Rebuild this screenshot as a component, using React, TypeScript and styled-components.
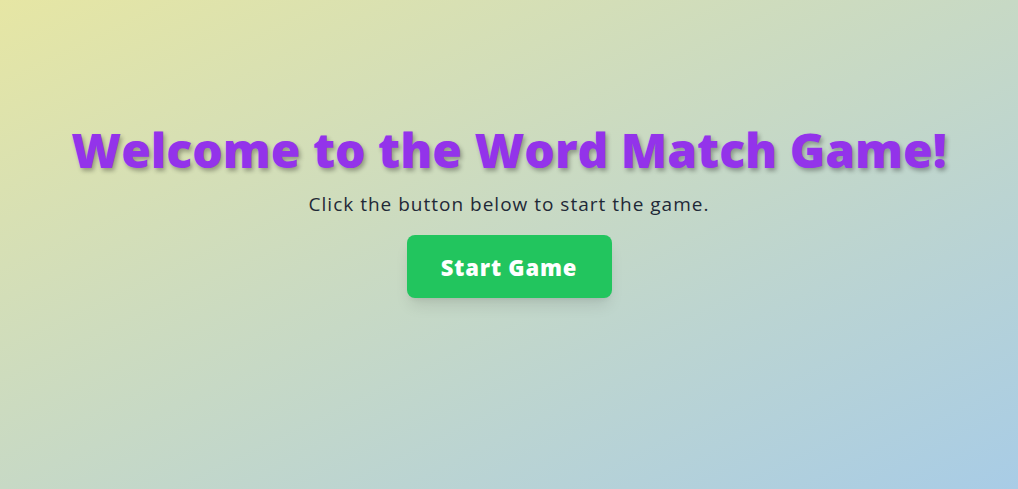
import React from "react";
import styled, { createGlobalStyle } from "styled-components";

const Global = createGlobalStyle`
  html, body { margin: 0; padding: 0; }
  body {
    font-family: "Open Sans", "Liberation Sans", sans-serif;
    background: linear-gradient(to bottom right, #e6e6a4, #a8cce6);
    min-height: 489px;
  }
`;

const Page = styled.main`
  min-height: 489px;
  display: flex;
  flex-direction: column;
  align-items: center;
  padding-top: 118px;
  box-sizing: border-box;
`;

const Title = styled.h1`
  margin: 0;
  font-family: "Open Sans", sans-serif;
  font-weight: 800;
  font-size: 48px;
  line-height: 64px;
  color: #9333ea;
  text-shadow: 2px 3px 4px rgba(0, 0, 0, 0.3);
`;

const Subtitle = styled.p`
  margin: 8px 0 0;
  font-family: "Open Sans", sans-serif;
  font-size: 19px;
  line-height: 28px;
  letter-spacing: 1px;
  color: #1f2937;
`;

const StartButton = styled.button`
  margin-top: 17px;
  width: 205px;
  height: 63px;
  border: none;
  border-radius: 8px;
  background: #22c55e;
  color: #fff;
  font-family: "Open Sans", sans-serif;
  font-weight: 800;
  font-size: 22px;
  letter-spacing: 0.8px;
  cursor: pointer;
  box-shadow: 0 10px 15px -3px rgba(0, 0, 0, 0.1), 0 4px 6px -4px rgba(0, 0, 0, 0.1);
`;

export default function App() {
  return (
    <>
      <Global />
      <Page>
        <Title>Welcome to the Word Match Game!</Title>
        <Subtitle>Click the button below to start the game.</Subtitle>
        <StartButton>Start Game</StartButton>
      </Page>
    </>
  );
}
